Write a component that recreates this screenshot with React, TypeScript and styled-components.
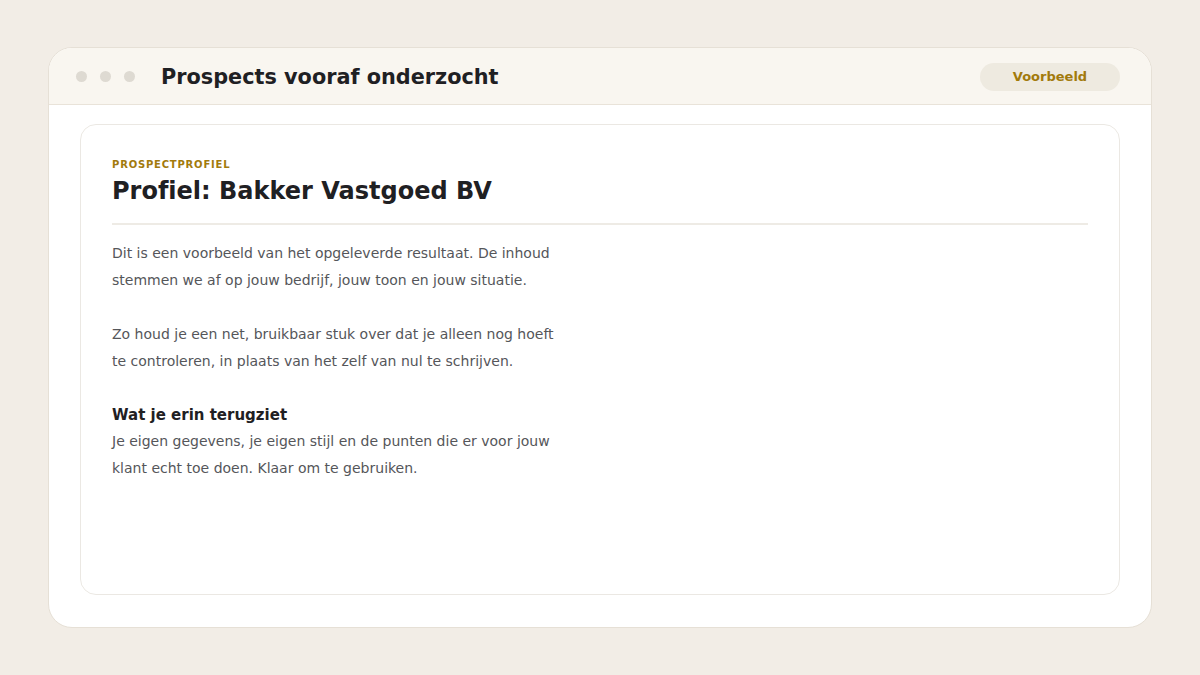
import React from "react";
import styled, { createGlobalStyle } from "styled-components";

const GlobalStyle = createGlobalStyle`
  html, body { margin: 0; padding: 0; }
  body {
    background: #f2ede6;
    font-family: "DejaVu Sans", "Noto Sans", sans-serif;
    font-variant-ligatures: none;
  }
  * { box-sizing: border-box; }
`;

const Page = styled.div`
  width: 1200px;
  height: 675px;
  display: flex;
  align-items: flex-start;
  justify-content: center;
  padding: 47px 48px 0;
`;

const Window = styled.div`
  width: 1104px;
  height: 581px;
  background: #ffffff;
  border: 1px solid #e6e0d6;
  border-radius: 24px;
  overflow: hidden;
  display: flex;
  flex-direction: column;
`;

const TitleBar = styled.header`
  height: 57px;
  flex: none;
  background: #f9f6f0;
  border-bottom: 1px solid #e9e3d9;
  display: flex;
  align-items: center;
  padding: 1px 31px 0 27px;
`;

const Dots = styled.div`
  display: flex;
  gap: 13px;
  margin-right: 26px;
`;

const Dot = styled.span`
  width: 11px;
  height: 11px;
  border-radius: 50%;
  background: #dedad2;
`;

const WindowTitle = styled.h1`
  margin: 0;
  font-size: 20.8px;
  font-weight: 700;
  color: #1f2023;
  flex: 1;
`;

const Badge = styled.span`
  width: 140px;
  height: 28px;
  border-radius: 14px;
  background: #eeeae0;
  color: #a27a0c;
  font-size: 13px;
  font-weight: 700;
  display: flex;
  align-items: center;
  justify-content: center;
`;

const Body = styled.main`
  flex: 1;
  padding: 19px 31px 32px;
  display: flex;
`;

const Sheet = styled.section`
  flex: 1;
  border: 1px solid #ebe8e3;
  border-radius: 16px;
  padding: 32px 31px 31px;
`;

const Eyebrow = styled.div`
  font-size: 10px;
  font-weight: 700;
  letter-spacing: 0.8px;
  color: #a27a0c;
  text-transform: uppercase;
  line-height: 16px;
`;

const SheetTitle = styled.h2`
  margin: 2px 0 0;
  font-size: 24px;
  font-weight: 700;
  color: #1f2023;
  line-height: 32px;
`;

const Rule = styled.hr`
  border: none;
  height: 2px;
  background: #eeebe5;
  margin: 16px 0 15px;
`;

const Text = styled.p<{ $gap?: boolean }>`
  margin: 0 0 ${(p) => (p.$gap ? "27px" : "0")};
  max-width: 460px;
  font-size: 14px;
  line-height: 27px;
  color: #55565a;
`;

const SubHeading = styled.h3`
  margin: 0;
  font-size: 15px;
  font-weight: 700;
  color: #1f2023;
  line-height: 26px;
`;

export default function App() {
  return (
    <>
      <GlobalStyle />
      <Page>
        <Window>
          <TitleBar>
            <Dots>
              <Dot />
              <Dot />
              <Dot />
            </Dots>
            <WindowTitle>Prospects vooraf onderzocht</WindowTitle>
            <Badge>Voorbeeld</Badge>
          </TitleBar>
          <Body>
            <Sheet>
              <Eyebrow>Prospectprofiel</Eyebrow>
              <SheetTitle>Profiel: Bakker Vastgoed BV</SheetTitle>
              <Rule />
              <Text $gap>
                Dit is een voorbeeld van het opgeleverde resultaat. De inhoud
                stemmen we af op jouw bedrijf, jouw toon en jouw situatie.
              </Text>
              <Text $gap>
                Zo houd je een net, bruikbaar stuk over dat je alleen nog hoeft
                te controleren, in plaats van het zelf van nul te schrijven.
              </Text>
              <SubHeading>Wat je erin terugziet</SubHeading>
              <Text>
                Je eigen gegevens, je eigen stijl en de punten die er voor jouw
                klant echt toe doen. Klaar om te gebruiken.
              </Text>
            </Sheet>
          </Body>
        </Window>
      </Page>
    </>
  );
}
